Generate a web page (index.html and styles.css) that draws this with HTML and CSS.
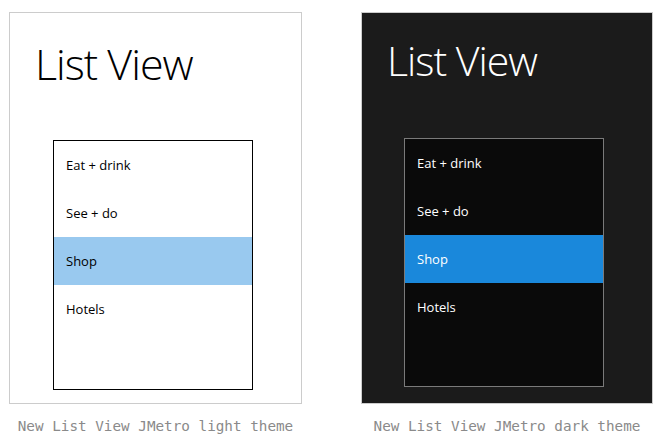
FILE: index.html
```html
<!DOCTYPE html>
<html>
<head>
<meta charset="utf-8">
<link rel="stylesheet" href="styles.css">
</head>
<body>
<div class="demos">
  <figure class="demo">
    <div class="panel panel-light">
      <h1 class="title">List View</h1>
      <ul class="list">
        <li class="item">Eat + drink</li>
        <li class="item">See + do</li>
        <li class="item selected">Shop</li>
        <li class="item">Hotels</li>
      </ul>
    </div>
    <figcaption class="caption">New List View JMetro light theme</figcaption>
  </figure>
  <figure class="demo demo-dark">
    <div class="panel panel-dark">
      <h1 class="title">List View</h1>
      <ul class="list">
        <li class="item">Eat + drink</li>
        <li class="item">See + do</li>
        <li class="item selected">Shop</li>
        <li class="item">Hotels</li>
      </ul>
    </div>
    <figcaption class="caption">New List View JMetro dark theme</figcaption>
  </figure>
</div>
</body>
</html>
```
FILE: styles.css
```css
html, body {
  margin: 0;
  padding: 0;
  background: #ffffff;
}

.demos {
  display: flex;
  align-items: flex-start;
  padding: 12px 0 0 9px;
  gap: 59px;
}

.demo {
  margin: 0;
  display: flex;
  flex-direction: column;
  align-items: center;
}

.panel {
  box-sizing: border-box;
  width: 293px;
  height: 392px;
  border: 1px solid #cccccc;
  display: flex;
  flex-direction: column;
  align-items: flex-start;
}

.panel-light {
  background: #ffffff;
  color: #000000;
}

.panel-dark {
  width: 292px;
  background: #1b1b1b;
  color: #ffffff;
}

.title {
  margin: 28px 0 0 25px;
  font-family: "Open Sans", "Noto Sans", sans-serif;
  font-weight: 300;
  font-size: 43px;
  line-height: 45px;
  letter-spacing: -1px;
}

.panel-dark .title {
  margin: 25px 0 0 25px;
  font-size: 41px;
  line-height: 45px;
}

.list {
  box-sizing: border-box;
  list-style: none;
  margin: 54px 0 0 43px;
  padding: 0;
  width: 200px;
  height: 250px;
  border: 1px solid #000000;
  background: #ffffff;
}

.panel-dark .list {
  margin: 55px 0 0 42px;
  border-color: #7a7a7a;
  background: #0a0a0a;
  height: 249px;
}

.item {
  height: 48px;
  line-height: 48px;
  padding-left: 12px;
  font-family: "Open Sans", "Noto Sans", sans-serif;
  font-size: 13px;
}

.panel-light .selected {
  background: #99c9ef;
}

.panel-dark .selected {
  background: #1a88db;
}

.caption {
  margin-top: 14px;
  font-family: "DejaVu Sans Mono", "Liberation Mono", monospace;
  font-size: 14.3px;
  line-height: 17px;
  color: #8a8a8a;
  white-space: nowrap;
}
```
